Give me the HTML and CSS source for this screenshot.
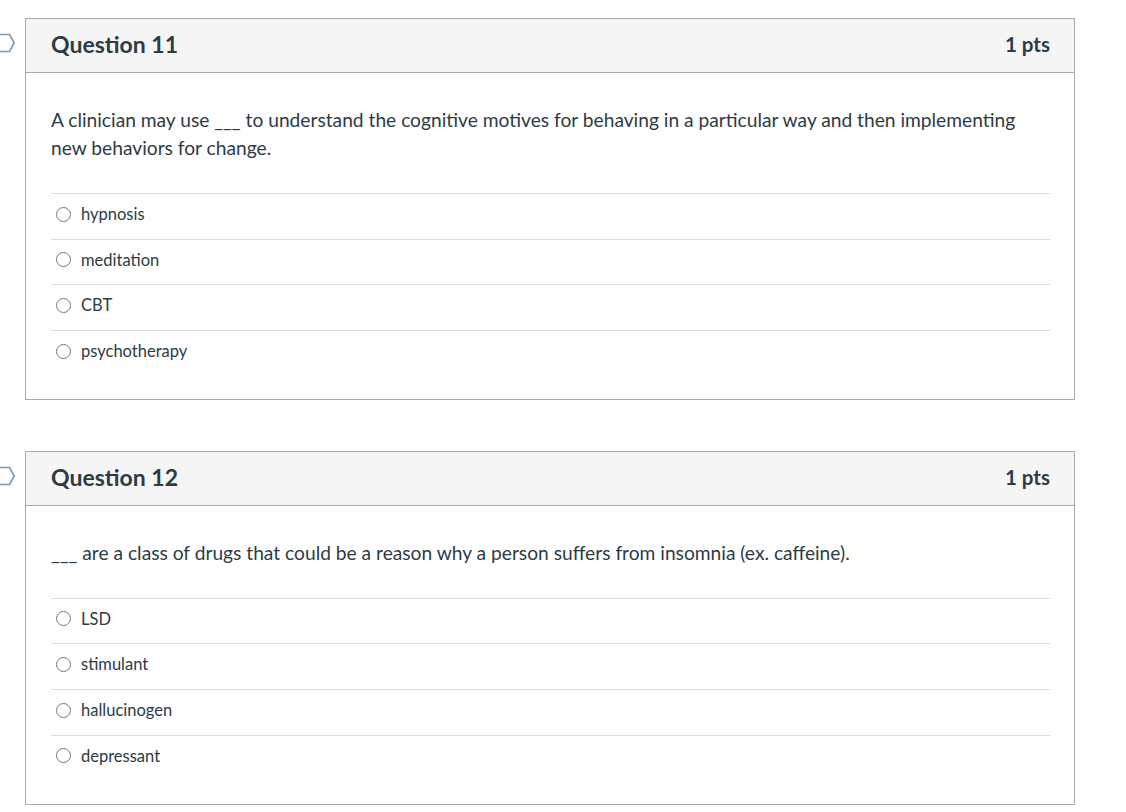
FILE: index.html
```html
<!DOCTYPE html>
<html lang="en">
<head>
<meta charset="utf-8">
<title>Quiz</title>
<link rel="stylesheet" href="styles.css">
</head>
<body>
<main class="quiz">
  <section class="question-row">
    <div class="flag">
      <svg width="18" height="22" viewBox="0 0 18 22" aria-hidden="true"><path d="M-6 2.5 H9.5 L14.2 11 L9.5 19.5 H-6" fill="none" stroke="#7f9ab0" stroke-width="1.6" stroke-linejoin="round"/></svg>
    </div>
    <div class="card">
      <header class="card-header">
        <h2 class="q-title">Question 11</h2>
        <span class="q-pts">1 pts</span>
      </header>
      <div class="card-body">
        <p class="q-text">A clinician may use ___ to understand the cognitive motives for behaving in a particular way and then implementing new behaviors for change.</p>
        <ul class="answers">
          <li class="answer"><input type="radio" name="q11" class="radio"><span>hypnosis</span></li>
          <li class="answer"><input type="radio" name="q11" class="radio"><span>meditation</span></li>
          <li class="answer"><input type="radio" name="q11" class="radio"><span>CBT</span></li>
          <li class="answer"><input type="radio" name="q11" class="radio"><span>psychotherapy</span></li>
        </ul>
      </div>
    </div>
  </section>
  <section class="question-row">
    <div class="flag">
      <svg width="18" height="22" viewBox="0 0 18 22" aria-hidden="true"><path d="M-6 2.5 H9.5 L14.2 11 L9.5 19.5 H-6" fill="none" stroke="#7f9ab0" stroke-width="1.6" stroke-linejoin="round"/></svg>
    </div>
    <div class="card">
      <header class="card-header">
        <h2 class="q-title">Question 12</h2>
        <span class="q-pts">1 pts</span>
      </header>
      <div class="card-body">
        <p class="q-text">___ are a class of drugs that could be a reason why a person suffers from insomnia (ex. caffeine).</p>
        <ul class="answers">
          <li class="answer"><input type="radio" name="q12" class="radio"><span>LSD</span></li>
          <li class="answer"><input type="radio" name="q12" class="radio"><span>stimulant</span></li>
          <li class="answer"><input type="radio" name="q12" class="radio"><span>hallucinogen</span></li>
          <li class="answer"><input type="radio" name="q12" class="radio"><span>depressant</span></li>
        </ul>
      </div>
    </div>
  </section>
</main>
</body>
</html>
```

FILE: styles.css
```css
html, body {
  margin: 0;
  padding: 0;
  background: #ffffff;
}
body {
  font-family: Lato, "Open Sans", sans-serif;
  color: #2d3b45;
}
.quiz {
  padding-top: 18px;
  display: flex;
  flex-direction: column;
  gap: 51px;
}
.question-row {
  display: flex;
  align-items: flex-start;
}
.flag {
  width: 25px;
  flex: none;
  padding-top: 14px;
}
.flag svg {
  display: block;
}
.card {
  width: 1048px;
  border: 1px solid #aaaaaa;
  background: #fff;
}
.card-header {
  box-sizing: border-box;
  height: 54px;
  background: #f5f5f5;
  border-bottom: 1px solid #aaaaaa;
  display: flex;
  align-items: center;
  justify-content: space-between;
  padding: 0 24px 3px 25px;
}
.q-title {
  margin: 0;
  font-size: 23px;
  font-weight: 700;
  color: #2d3b45;
}
.q-pts {
  font-size: 20.5px;
  font-weight: 700;
  color: #2d3b45;
}
.card-body {
  padding: 33px 24px 23px 25px;
}
.q-text {
  margin: 0;
  font-size: 19.2px;
  line-height: 28px;
}
.answers {
  list-style: none;
  margin: 31px 0 0;
  padding: 0;
}
.answer {
  display: flex;
  align-items: center;
  border-top: 1px solid #dddddd;
  padding: 9px 0 13.7px 5px;
  font-size: 16.5px;
  line-height: 22px;
}
.radio {
  appearance: none;
  -webkit-appearance: none;
  margin: 0 10px 0 0;
  width: 15px;
  height: 15px;
  border: 1px solid #777777;
  border-radius: 50%;
  background: #fff;
  flex: none;
}
```
